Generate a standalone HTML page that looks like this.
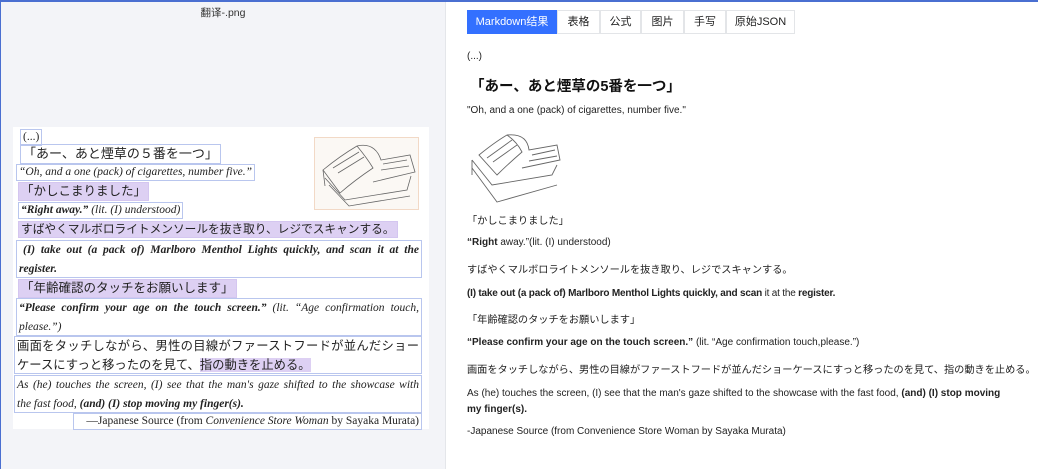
<!DOCTYPE html>
<html><head><meta charset="utf-8"><style>
*{margin:0;padding:0;box-sizing:border-box}
body{width:1038px;height:469px;overflow:hidden;background:#fff;position:relative;font-family:"Liberation Sans","Noto Sans CJK SC",sans-serif;color:#222}
.a{position:absolute;white-space:nowrap}
#left{position:absolute;left:0;top:0;width:446px;height:469px;background:#f3f4f8;border-left:1px solid #4a6fd1;border-right:1px solid #e4e6ea}
#topb{position:absolute;left:0;top:0;width:1038px;height:2px;background:#4a6fd1}
#doc{position:absolute;left:13px;top:127px;width:416px;height:302px;background:#fff;font-family:"Liberation Serif","Noto Serif CJK SC",serif;font-size:11.5px;color:#222}
#doc .l{position:absolute;white-space:nowrap;border:1px solid #b9c6ee;height:17px;line-height:15px;padding:0 2px}
#doc .p{background:#ddd0f3;border-color:#d4c6f0}
#doc .j{font-family:"Liberation Serif","Noto Sans CJK JP",serif;font-size:11.5px}
.tab{position:absolute;top:10px;height:24px;line-height:22px;font-size:11px;text-align:center;border:1px solid #e3e5e8;background:#fff;color:#222}
.r{position:absolute;left:467px;font-size:10px;white-space:nowrap;color:#222;font-family:"Liberation Sans","Noto Sans CJK JP",sans-serif}
.rj{font-size:10.2px}
</style></head><body>
<div id="left"><div class="a" style="left:0;width:444px;text-align:center;top:5px;font-size:10.5px;color:#333">翻译-.png</div></div>
<div id="topb"></div>
<div id="doc">
<div class="l" style="left:7px;top:2px">(...)</div>
<div class="l j" style="left:7px;top:17px;height:20px;line-height:18px;font-size:13px">「あー、あと煙草の５番を一つ」</div>
<div class="l" style="left:3px;top:37px;font-style:italic">“Oh, and a one (pack) of cigarettes, number five.”</div>
<div class="l j p" style="left:5px;top:55px;font-size:12.5px;height:19px;line-height:17px">「かしこまりました」</div>
<div class="l" style="left:5px;top:75px"><i><b>“Right away.”</b> (lit. (I) understood)</i></div>
<div class="l j p" style="left:5px;top:94px;font-size:11.7px">すばやくマルボロライトメンソールを抜き取り、レジでスキャンする。</div>
<div class="l" style="left:3px;top:113px;width:406px;height:38px;line-height:19px;font-style:italic;font-weight:bold;white-space:normal"><div style="text-align:justify;text-align-last:justify;padding-left:4px">(I) take out (a pack of) Marlboro Menthol Lights quickly, and scan it at the</div><div>register.</div></div>
<div class="l j p" style="left:5px;top:152px;font-size:12.5px;height:19px;line-height:17px">「年齢確認のタッチをお願いします」</div>
<div class="l" style="left:3px;top:171px;width:406px;height:38px;line-height:19px;font-style:italic;white-space:normal"><div style="text-align:justify;text-align-last:justify"><b>“Please confirm your age on the touch screen.”</b> (lit. “Age confirmation touch,</div><div>please.”)</div></div>
<div class="l j" style="left:1px;top:209px;width:408px;height:38px;line-height:19px;white-space:normal;font-size:12.3px;text-align:justify">画面をタッチしながら、男性の目線がファーストフードが並んだショーケースにすっと移ったのを見て、<span style="background:#ddd0f3">指の動きを止める。</span></div>
<div class="l" style="left:1px;top:248px;width:408px;height:38px;line-height:19px;font-style:italic;white-space:normal"><div style="text-align:justify;text-align-last:justify">As (he) touches the screen, (I) see that the man's gaze shifted to the showcase with</div><div>the fast food, <b>(and) (I) stop moving my finger(s).</b></div></div>
<div class="l" style="left:60px;top:286px;width:349px;text-align:right">—Japanese Source (from <i>Convenience Store Woman</i> by Sayaka Murata)</div>
<div style="position:absolute;left:301px;top:10px;width:105px;height:73px;border:1px solid #f2d9c6;background:#fbf8f4">
<svg width="103" height="71" viewBox="0 0 103 71" fill="none" stroke="#666" stroke-width=".8"><path d="M8 32 Q25 18 42 8 Q52 20 58 30 Q40 42 25 55Z M42 8 Q60 4 66 22 L95 17 L100 34 L58 44"/><path d="M10 40 L30 62 L92 52 L96 38 M14 47 L34 68 L95 58 M8 32 L10 48"/><path d="M18 30 L44 14 M23 35 L49 19 M68 26 L92 22 M66 32 L94 28"/></svg></div>
</div>
<div class="tab" style="left:467px;width:90px;background:#3370ff;border-color:#3370ff;color:#fff">Markdown结果</div>
<div class="tab" style="left:557px;width:43px">表格</div>
<div class="tab" style="left:600px;width:41px">公式</div>
<div class="tab" style="left:641px;width:43px">图片</div>
<div class="tab" style="left:684px;width:42px">手写</div>
<div class="tab" style="left:726px;width:69px">原始JSON</div>
<div class="r" style="top:51px">(...)</div>
<div class="r" style="top:75px;font-size:14.5px;font-weight:bold;color:#111;left:470px">「あー、あと煙草の5番を一つ」</div>
<div class="r" style="top:105px">"Oh, and a one (pack) of cigarettes, number five."</div>
<svg style="position:absolute;left:467px;top:130px" width="96" height="76" viewBox="0 0 96 76" fill="none" stroke="#666" stroke-width=".9"><path d="M12 25 Q28 12 40 5 Q50 12 55 22 Q40 35 30 45Z M40 5 Q60 3 62 20 L90 15 L93 30 L55 38"/><path d="M5 30 L25 55 L85 45 L90 35 M5 38 L30 72 L90 55 M5 30 L5 45"/><path d="M20 28 L45 10 M26 32 L50 15 M65 25 L88 20 M62 31 L90 26"/></svg>
<div class="r rj" style="top:212px">「かしこまりました」</div>
<div class="r" style="top:237px"><b>“Right</b> away.”(lit. (I) understood)</div>
<div class="r rj" style="top:261px">すばやくマルボロライトメンソールを抜き取り、レジでスキャンする。</div>
<div class="r" style="top:288px;letter-spacing:-0.2px"><b>(I) take out (a pack of) Marlboro Menthol Lights quickly, and scan</b> it at the <b>register.</b></div>
<div class="r rj" style="top:311px">「年齢確認のタッチをお願いします」</div>
<div class="r" style="top:337px"><b>“Please confirm your age on the touch screen.”</b> (lit. “Age confirmation touch,please.”)</div>
<div class="r rj" style="top:361px">画面をタッチしながら、男性の目線がファーストフードが並んだショーケースにすっと移ったのを見て、指の動きを止める。</div>
<div class="r" style="top:386px;line-height:16px">As (he) touches the screen, (I) see that the man's gaze shifted to the showcase with the fast food, <b>(and) (I) stop moving</b><br><b>my finger(s).</b></div>
<div class="r" style="top:426px">-Japanese Source (from Convenience Store Woman by Sayaka Murata)</div>
</body></html>
